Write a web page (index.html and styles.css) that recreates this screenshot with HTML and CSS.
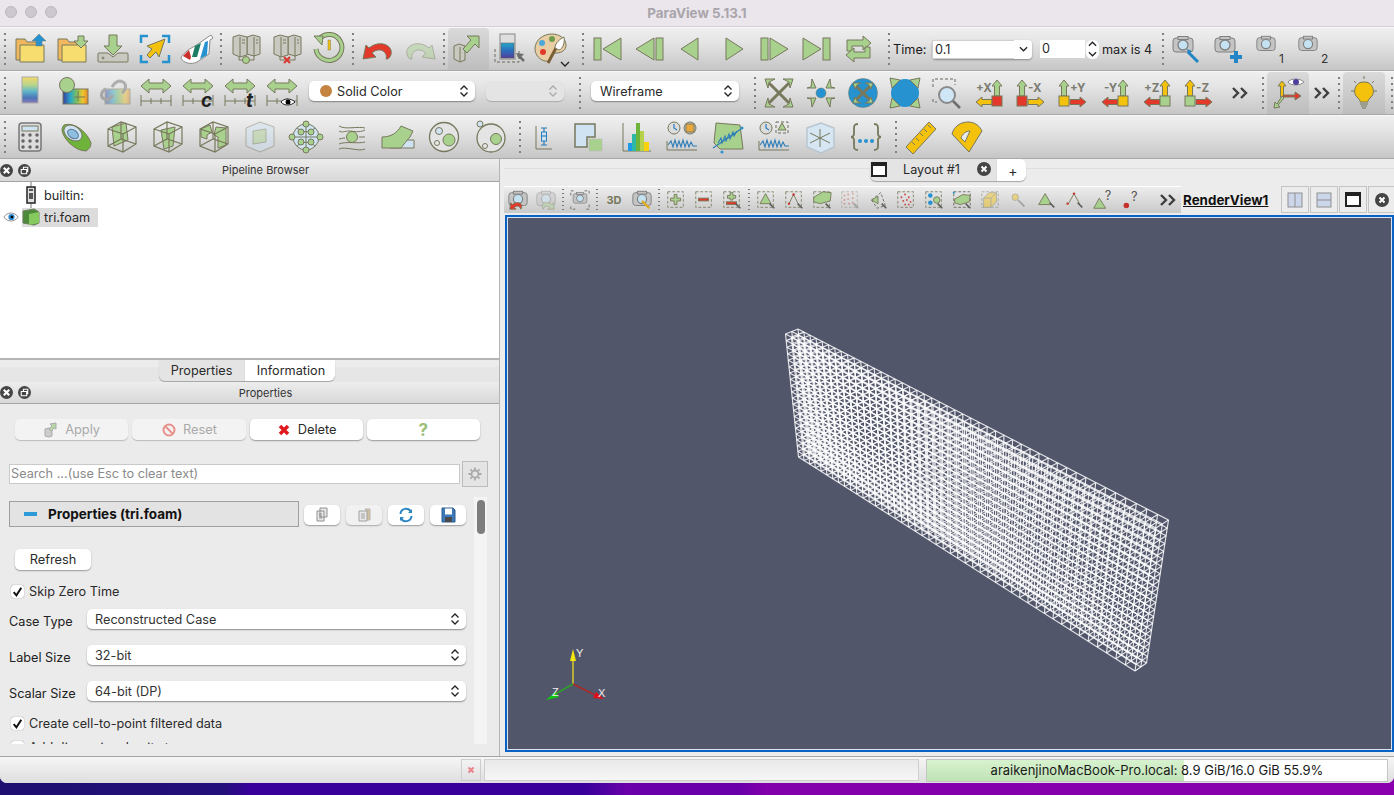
FILE: index.html
```html
<!DOCTYPE html>
<html lang="en">
<head>
<meta charset="utf-8">
<title>ParaView 5.13.1</title>
<link rel="stylesheet" href="styles.css">
</head>
<body>
<svg class="defs" aria-hidden="true">
  <defs>
    <linearGradient id="cmap" x1="0" y1="0" x2="0" y2="1">
      <stop offset="0" stop-color="#f3d86a"/><stop offset=".3" stop-color="#b9d58a"/><stop offset=".55" stop-color="#5fb7c9"/><stop offset=".8" stop-color="#4b74b8"/><stop offset="1" stop-color="#8b78b6"/>
    </linearGradient>
    <linearGradient id="cmaph" x1="0" y1="0" x2="1" y2="0">
      <stop offset="0" stop-color="#3b3f9e"/><stop offset=".3" stop-color="#2aa6c9"/><stop offset=".55" stop-color="#7cc05e"/><stop offset=".8" stop-color="#f2c52e"/><stop offset="1" stop-color="#e2872b"/>
    </linearGradient>
    <linearGradient id="cmapd" x1="0" y1="0" x2="0" y2="1">
      <stop offset="0" stop-color="#28a7c8"/><stop offset=".5" stop-color="#2b6fbc"/><stop offset="1" stop-color="#51409b"/>
    </linearGradient>
    <symbol id="folder" viewBox="0 0 36 36"><path class="or" d="M4 29V8h9l2 3h12v18z"/><path class="ye2" d="M8 31V14h24v17z"/></symbol>
    <symbol id="servers" viewBox="0 0 36 36"><path class="sv" d="M19 6l6-2 7 2v17l-6 2-7-2z"/><path class="sv" d="M5 6l6-2 8 2v18l-7 2-7-3z"/><path class="ln" d="M12 6v20M26 6v19M14 9h3M14 12h3M28 9h2M28 12h2M11 26v3h15v-4"/></symbol>
    <symbol id="rescale" viewBox="0 0 36 36"><path class="gn" d="M3 11l8-7v4h14V4l8 7-8 7v-4H11v4z"/><path class="ln" d="M3 20v11M33 20v11M3 26h30M13 23v6M23 23v6"/></symbol>
    <symbol id="camera" viewBox="0 0 24 24"><rect class="cb" x="2" y="4" width="20" height="14" rx="3"/><rect class="cb" x="7" y="2.500" width="10" height="3"/><circle class="cl" cx="12" cy="11" r="5"/></symbol>
    <symbol id="dash" viewBox="0 0 24 24"><rect class="ds" x="3" y="3" width="17" height="17"/></symbol>
    <symbol id="cursor" viewBox="0 0 24 24"><path class="cu" d="M16 16l5 5"/></symbol>
    <symbol id="up" viewBox="0 0 12 18"><path d="M6 1l5 6H8.500v10h-5V7H1z"/></symbol>
    <symbol id="rt" viewBox="0 0 18 12"><path d="M17 6l-6 5V8.500H1v-5h10V1z"/></symbol>
    <symbol id="lf" viewBox="0 0 18 12"><path d="M1 6l6 5V8.500h10v-5H7V1z"/></symbol>
    <symbol id="wire" viewBox="0 0 36 36"><path class="wf" d="M4 10l13-7 15 5v17l-13 8L4 27zM4 10l15 5v18M19 15l13-7M17 3v17M4 27l13-7 15 5"/></symbol>
    <symbol id="dbl" viewBox="0 0 20 14"><path class="dbl" d="M3 2l5 5-5 5M11 2l5 5-5 5"/></symbol>
  </defs>
</svg>

<div class="window">
  <header class="titlebar">
    <div class="lights"><span class="light"></span><span class="light"></span><span class="light"></span></div>
    <div class="wintitle">ParaView 5.13.1</div>
  </header>

  <div class="tb">
    <span class="sep"></span>
    <span class="i"><svg class="ic" viewBox="0 0 36 36"><use href="#folder"/><path class="bl" d="M27 3l7 7h-4v5h-6v-5h-4z"/></svg></span>
    <span class="i"><svg class="ic" viewBox="0 0 36 36"><use href="#folder"/><path class="gn" d="M27 17l7-7h-4V5h-6v5h-4z"/></svg></span>
    <span class="i"><svg class="ic" viewBox="0 0 36 36"><path class="tray" d="M4 22h9l5 4 5-4h9a1 1 0 0 1 1 1v7a1 1 0 0 1-1 1H4a1 1 0 0 1-1-1v-7a1 1 0 0 1 1-1z"/><circle class="ln" cx="8" cy="27" r="1"/><path class="gn" d="M18 24l-9-9h5V4h8v11h5z"/></svg></span>
    <span class="i"><svg class="ic" viewBox="0 0 36 36"><path class="cr" d="M4 12V5h7M25 5h7v7M32 24v7h-7M11 31H4v-7"/><path class="ye" d="M28 8L10 15l5 3-5 6 3 3 6-6 3 5z"/></svg></span>
    <span class="i"><svg class="ic" viewBox="0 0 36 36"><path class="wh" d="M32 4l2 3-3 2-1 14-12 8c-6 3-14 1-16-4 1-3 6-8 14-12l13-9z"/><path class="rd0" d="M4 25l6-6 2 7-1 3z"/><path class="gn0" d="M13 26l3-11 6-3-4 14z"/><path class="bl0" d="M21 28l5-17 3-1-1 14z"/></svg></span>
    <span class="sep"></span>
    <span class="i"><svg class="ic" viewBox="0 0 36 36"><use href="#servers"/><circle class="gn" cx="18" cy="29" r="3.500"/></svg></span>
    <span class="i"><svg class="ic" viewBox="0 0 36 36"><use href="#servers"/><path class="xr" d="M15 26l6 6M21 26l-6 6"/></svg></span>
    <span class="i"><svg class="ic" viewBox="0 0 36 36"><path class="ringo" d="M9 7A13 13 0 1 1 5 18"/><path class="ringi" d="M9 7A13 13 0 1 1 5 18"/><path class="gn" d="M3 5l9 0-1 9z"/><rect class="yb" x="17" y="9" width="2.500" height="10"/></svg></span>
    <span class="sep"></span>
    <span class="i"><svg class="ic" viewBox="0 0 36 36"><path class="rd" d="M3 28l3-14 3 3c6-5 15-6 20-1 3 3 3 8 0 11-1 1-2 1-3 1 1-3 0-6-3-8-3-2-8-1-11 2l4 4z"/></svg></span>
    <span class="i faded"><svg class="ic" viewBox="0 0 36 36"><path class="gn" d="M33 28l-3-14-3 3c-6-5-15-6-20-1-3 3-3 8 0 11 1 1 2 1 3 1-1-3 0-6 3-8 3-2 8-1 11 2l-4 4z"/></svg></span>
    <span class="sep"></span>
    <span class="i on"><svg class="ic" viewBox="0 0 36 36"><path class="sv" d="M4 15l5-2 6 2v14l-5 2-6-3z"/><path class="ln" d="M10 16v15"/><path class="gn" d="M29 5v12l-4-4-8 9-4-4 8-9-4-4z"/></svg></span>
    <span class="i"><svg class="ic" viewBox="0 0 36 36"><rect class="bar" x="8" y="3" width="15" height="25"/><rect class="cd" x="9" y="12" width="13" height="15"/><path class="dsn" d="M3 18v13h24V18"/><path class="cu2" d="M26 24l6 6"/><path class="cu3" d="M24 22l8 1-5 5z"/></svg></span>
    <span class="i ipal"><svg class="ic" viewBox="0 0 36 36"><path class="pal" d="M18 3C9 3 1 9 1 18c0 6 5 11 10 12 4 1 6-1 6-4 0-3 2-4 5-4 6 0 10-3 10-8C32 8 26 3 18 3z"/><circle class="p1" cx="8" cy="12" r="3"/><circle class="p2" cx="18" cy="8" r="3"/><circle class="p3" cx="9" cy="21" r="3"/><path class="br" d="M14 32l8-15"/><path class="bw" d="M21 17c0-5 5-9 9-11 1 5-1 12-5 13z"/></svg><svg class="caret" viewBox="0 0 10 6"><path d="M1 1l4 4 4-4"/></svg></span>
    <span class="sep sep7"></span>
    <span class="i"><svg class="ic" viewBox="0 0 36 36"><rect class="gn" x="4" y="7" width="7" height="22"/><path class="gn" d="M31 7v22L13 18z"/></svg></span>
    <span class="i"><svg class="ic" viewBox="0 0 36 36"><rect class="gn" x="25" y="7" width="7" height="22"/><path class="gn" d="M23 7v22L5 18z"/></svg></span>
    <span class="i"><svg class="ic" viewBox="0 0 36 36"><path class="gn" d="M25 7v22L8 18z"/></svg></span>
    <span class="i"><svg class="ic" viewBox="0 0 36 36"><path class="gn" d="M11 7v22l17-11z"/></svg></span>
    <span class="i"><svg class="ic" viewBox="0 0 36 36"><rect class="gn" x="4" y="7" width="7" height="22"/><path class="gn" d="M13 7v22l18-11z"/></svg></span>
    <span class="i"><svg class="ic" viewBox="0 0 36 36"><rect class="gn" x="25" y="7" width="7" height="22"/><path class="gn" d="M5 7v22l18-11z"/></svg></span>
    <span class="i"><svg class="ic" viewBox="0 0 36 36"><path class="gn" d="M7 20V9h16V5l8 7-8 7v-4H12v5z"/><path class="gn" d="M30 16v11H14v4l-8-7 8-7v4h11v-5z"/></svg></span>
    <span class="sep sep7"></span>
    <span class="lbl time">Time:</span>
    <span class="combo"><span class="combotext">0.1</span><span class="combobtn"><svg class="chev" viewBox="0 0 10 6"><path d="M1 1l4 4 4-4"/></svg></span></span>
    <span class="spin">0</span>
    <span class="spinbtns"><svg class="chev" viewBox="0 0 10 6"><path d="M1 5l4-4 4 4"/></svg><svg class="chev" viewBox="0 0 10 6"><path d="M1 1l4 4 4-4"/></svg></span>
    <span class="lbl maxis">max is 4</span>
    <span class="sep sep8"></span>
    <span class="i"><svg class="ic" viewBox="0 0 36 36"><use href="#camera" x="2" y="3" width="24" height="24"/><path class="wr" d="M19 21l10 10"/><path class="wr2" d="M18 18l1 5 4-3z"/></svg></span>
    <span class="i"><svg class="ic" viewBox="0 0 36 36"><use href="#camera" x="2" y="3" width="24" height="24"/><path class="pl" d="M25 20v12M19 26h12"/></svg></span>
    <span class="i"><svg class="ic" viewBox="0 0 36 36"><use href="#camera" x="3" y="3" width="22" height="22"/><text class="sub" x="27" y="32">1</text></svg></span>
    <span class="i"><svg class="ic" viewBox="0 0 36 36"><use href="#camera" x="3" y="3" width="22" height="22"/><text class="sub" x="27" y="32">2</text></svg></span>
  </div>

  <div class="tb">
    <span class="sep"></span>
    <span class="i2"><svg class="ic" viewBox="0 0 36 36"><rect class="cmap" x="10" y="2" width="16" height="26"/></svg></span>
    <span class="i2"><svg class="ic" viewBox="0 0 36 36"><rect class="cmaph" x="9" y="14" width="25" height="15"/><path class="ln" d="M24 16v10M20 22h11"/><circle class="gn" cx="13" cy="10" r="7.500"/></svg></span>
    <span class="i2 faded"><svg class="ic" viewBox="0 0 36 36"><rect class="cmaph" x="9" y="14" width="25" height="15"/><path class="chain" d="M10 14c-5 2-6 8-2 10s7-1 9-4M16 12c3-5 7-7 11-5s3 8-1 11"/></svg></span>
    <span class="i2"><svg class="ic" viewBox="0 0 36 36"><use href="#rescale"/></svg></span>
    <span class="i2"><svg class="ic" viewBox="0 0 36 36"><use href="#rescale"/><text class="tag" x="21" y="32">c</text></svg></span>
    <span class="i2"><svg class="ic" viewBox="0 0 36 36"><use href="#rescale"/><text class="tag" x="24" y="32">t</text></svg></span>
    <span class="i2"><svg class="ic" viewBox="0 0 36 36"><use href="#rescale"/><path class="eyeb" d="M17 27c3-4 10-4 14 0-4 4-11 4-14 0z"/><circle class="eyep" cx="24" cy="27" r="2.500"/></svg></span>
    <span class="select s-solid"><span class="dot"></span><span class="seltext">Solid Color</span><svg class="updn" viewBox="0 0 10 14"><path d="M1.500 5.500L5 2l3.500 3.500M1.500 8.500L5 12l3.500-3.500"/></svg></span>
    <span class="select s-empty"><svg class="updn" viewBox="0 0 10 14"><path d="M1.500 5.500L5 2l3.500 3.500M1.500 8.500L5 12l3.500-3.500"/></svg></span>
    <span class="sep sep15"></span>
    <span class="select s-wire"><span class="seltext">Wireframe</span><svg class="updn" viewBox="0 0 10 14"><path d="M1.500 5.500L5 2l3.500 3.500M1.500 8.500L5 12l3.500-3.500"/></svg></span>
    <span class="sep sep15b"></span>
    <span class="i2"><svg class="ic" viewBox="0 0 36 36"><path class="thick" d="M8 8l20 20M28 8L8 28"/><path class="gn" d="M4 4h10l-6 3-1 6zM32 4H22l6 3 1 6zM4 32h10l-6-3-1-6zM32 32H22l6-3 1-6z"/></svg></span>
    <span class="i2"><svg class="ic" viewBox="0 0 36 36"><circle class="bl" cx="18" cy="18" r="5"/><path class="gn" d="M13 13H4l4-1 1-8zM23 13h9l-4-1-1-8zM13 23H4l4 1 1 8zM23 23h9l-4 1-1 8z"/></svg></span>
    <span class="i2"><svg class="ic" viewBox="0 0 36 36"><circle class="bl" cx="18" cy="18" r="14.500"/><path class="thick" d="M11 11l14 14M25 11L11 25"/><path class="gn" d="M8 8h8l-4 2-2 4zM28 8h-8l4 2 2 4zM8 28h8l-4-2-2-4zM28 28h-8l4-2 2-4z"/></svg></span>
    <span class="i2"><svg class="ic" viewBox="0 0 36 36"><circle class="bln" cx="18" cy="18" r="14"/><path class="gn" d="M3 3l10 2-8 8zM33 3l-10 2 8 8zM3 33l10-2-8-8zM33 33l-10-2 8-8z"/></svg></span>
    <span class="i2"><svg class="ic" viewBox="0 0 36 36"><path class="dsn" d="M4 12V4h22v6M4 24v3h4"/><circle class="mag" cx="18" cy="20" r="8"/><path class="cu2" d="M24 26l7 7"/></svg></span>
    <span class="i2"><svg class="ic" viewBox="0 0 36 36"><text class="ax" x="5" y="17">+X</text><use class="g-a" href="#up" x="20" y="4" width="12" height="18"/><use class="y-a" href="#lf" x="4" y="21" width="18" height="12"/><rect class="rd" x="21" y="21" width="10" height="10"/></svg></span>
    <span class="i2"><svg class="ic" viewBox="0 0 36 36"><text class="ax" x="15" y="17">-X</text><use class="g-a" href="#up" x="3" y="4" width="12" height="18"/><use class="y-a" href="#rt" x="14" y="21" width="18" height="12"/><rect class="rd" x="4" y="21" width="10" height="10"/></svg></span>
    <span class="i2"><svg class="ic" viewBox="0 0 36 36"><text class="ax" x="15" y="17">+Y</text><use class="g-a" href="#up" x="3" y="4" width="12" height="18"/><use class="r-a" href="#rt" x="14" y="21" width="18" height="12"/><rect class="ye" x="4" y="21" width="10" height="10"/></svg></span>
    <span class="i2"><svg class="ic" viewBox="0 0 36 36"><text class="ax" x="7" y="17">-Y</text><use class="g-a" href="#up" x="20" y="4" width="12" height="18"/><use class="r-a" href="#lf" x="4" y="21" width="18" height="12"/><rect class="ye" x="21" y="21" width="10" height="10"/></svg></span>
    <span class="i2"><svg class="ic" viewBox="0 0 36 36"><text class="ax" x="5" y="17">+Z</text><use class="y-a" href="#up" x="20" y="4" width="12" height="18"/><use class="r-a" href="#lf" x="4" y="21" width="18" height="12"/><rect class="gn" x="21" y="21" width="10" height="10"/></svg></span>
    <span class="i2"><svg class="ic" viewBox="0 0 36 36"><text class="ax" x="15" y="17">-Z</text><use class="y-a" href="#up" x="3" y="4" width="12" height="18"/><use class="r-a" href="#rt" x="14" y="21" width="18" height="12"/><rect class="gn" x="4" y="21" width="10" height="10"/></svg></span>
    <span class="more m40"><svg class="dblic" viewBox="0 0 20 14"><use href="#dbl"/></svg></span>
    <span class="sep"></span>
    <span class="i2 on"><svg class="ic" viewBox="0 0 36 36"><path class="ye" d="M12 6l4 5h-2.500v11h-3V11H8z"/><path class="rd" d="M13 20h12v-3l6 4-6 4v-3H13z"/><path class="gn" d="M12 21l2 2-6 7 2 2-6 1 1-6 2 2z"/><path class="eyew" d="M18 7c3-4 12-4 16 0-4 4-13 4-16 0z"/><circle class="eyev" cx="26" cy="7" r="3"/></svg></span>
    <span class="more m25"><svg class="dblic" viewBox="0 0 20 14"><use href="#dbl"/></svg></span>
    <span class="sep sep9"></span>
    <span class="i2 on"><svg class="ic" viewBox="0 0 36 36"><path class="ye" d="M18 7a9 9 0 0 0-6 16c2 2 2 3 2 4h8c0-1 0-2 2-4a9 9 0 0 0-6-16z"/><path class="ln" d="M14 29h8M15 31h6M16 33h4M18 1v3M5 16h3M28 16h3M8 6l2 2M28 6l-2 2"/></svg></span>
    <span class="sep sep6"></span>
  </div>

  <div class="tb tb3">
    <span class="sep tight"></span>
    <span class="i3"><svg class="ic" viewBox="0 0 36 36"><rect class="calc" x="7" y="4" width="22" height="28" rx="3"/><rect class="lb" x="10" y="7" width="16" height="5"/><path class="keys" d="M11 16h.01M18 16h.01M25 16h.01M11 22h.01M18 22h.01M25 22h.01M11 28h.01M18 28h.01M25 28h.01"/></svg></span>
    <span class="i3"><svg class="ic" viewBox="0 0 36 36"><path class="gs" d="M6 6c9-3 22 5 27 18 0 4-2 6-5 8C17 32 5 20 4 11c0-2 1-4 2-5z"/><ellipse class="lb" cx="15" cy="14" rx="10" ry="7" transform="rotate(35 15 14)"/><ellipse class="lbd" cx="15" cy="15" rx="6" ry="4" transform="rotate(35 15 15)"/></svg></span>
    <span class="i3"><svg class="ic" viewBox="0 0 36 36"><path class="gn" d="M8 8l14-4 2 17-14 6z"/><use href="#wire"/></svg></span>
    <span class="i3"><svg class="ic" viewBox="0 0 36 36"><path class="gn" d="M11 11l14-3-2 19-9 3z"/><use href="#wire"/></svg></span>
    <span class="i3"><svg class="ic" viewBox="0 0 36 36"><path class="gn" d="M5 10l9-4 2 7-5 3v4l-6-2zM20 8l10 1v17l-8 3v-11l-4-2z"/><use href="#wire"/></svg></span>
    <span class="i3 faded"><svg class="ic" viewBox="0 0 36 36"><path class="lb" d="M4 9l14-6 14 5v19l-14 6L4 27z"/><path class="gn" d="M11 12l13-2v13l-13 2z"/></svg></span>
    <span class="i3"><svg class="ic" viewBox="0 0 36 36"><circle class="lb" cx="18" cy="18" r="13"/><path class="ln" d="M5 18h26M18 5v26M9 9c6 5 12 5 18 0M9 27c6-5 12-5 18 0"/><circle class="gn" cx="18" cy="5" r="3"/><circle class="gn" cx="18" cy="31" r="3"/><circle class="gn" cx="4" cy="18" r="3"/><circle class="gn" cx="32" cy="18" r="3"/><circle class="gn" cx="13" cy="13" r="3"/><circle class="gn" cx="23" cy="13" r="3"/><circle class="gn" cx="13" cy="23" r="3"/><circle class="gn" cx="23" cy="23" r="3"/></svg></span>
    <span class="i3"><svg class="ic" viewBox="0 0 36 36"><circle class="gn" cx="18" cy="18" r="5.500"/><path class="ln" d="M5 7c6 4 20 0 26 2M5 12c3 2 6 0 10 0 4 0 10 2 16-1M5 25c6-3 20 0 26-2M5 30c6-3 20 3 26 0M5 20c1 0 3-1 6-1M25 18h6"/></svg></span>
    <span class="i3"><svg class="ic" viewBox="0 0 36 36"><path class="lb" d="M10 29l4-8h20v8z"/><path class="gn" d="M2 18c9 0 15-4 19-11l12 5-3 6c-3 3-9 11-9 11H2z"/></svg></span>
    <span class="i3"><svg class="ic" viewBox="0 0 36 36"><circle class="gyc" cx="18" cy="18" r="14.500"/><circle class="gn" cx="23" cy="21" r="6"/><circle class="lb" cx="13" cy="12" r="3.500"/><circle class="wh2" cx="11" cy="24" r="2.500"/></svg></span>
    <span class="i3"><svg class="ic" viewBox="0 0 36 36"><circle class="lb" cx="8" cy="5" r="3"/><circle class="gyc" cx="19" cy="19" r="14"/><circle class="gn" cx="24" cy="20" r="5.500"/><circle class="wh2" cx="13" cy="27" r="2.500"/></svg></span>
    <span class="sep s3a"></span>
    <span class="i3"><svg class="ic" viewBox="0 0 36 36"><path class="ln" d="M10 7v23h16"/><path class="lnb" d="M18 9v17M15 9h6M15 26h6"/><rect class="lb2" x="15.500" y="13" width="5" height="9"/><path class="lnb" d="M15 17h6"/></svg></span>
    <span class="i3"><svg class="ic" viewBox="0 0 36 36"><path class="lbn" d="M3 5h20v13h-8v10H3z"/><rect class="gd" x="17" y="20" width="13" height="12"/></svg></span>
    <span class="i3"><svg class="ic" viewBox="0 0 36 36"><path class="ln" d="M5 4v28h28"/><rect class="hb" x="10" y="24" width="4" height="8"/><rect class="hc" x="14" y="15" width="4" height="17"/><rect class="hg" x="18" y="4" width="4" height="28"/><rect class="hl" x="22" y="12" width="4" height="20"/><rect class="hy" x="26" y="23" width="5" height="9"/></svg></span>
    <span class="i3"><svg class="ic" viewBox="0 0 36 36"><circle class="clock" cx="10" cy="9" r="6"/><path class="lnb" d="M10 5v4l3 2"/><circle class="oc" cx="26" cy="9" r="6"/><rect class="oc2" x="22" y="5" width="8" height="8"/><path class="wave" d="M4 26l3-4 2 6 2-7 2 7 2-6 2 6 2-7 2 7 2-6 2 6 2-5 2 4h4"/><path class="ln" d="M3 22v9h30"/></svg></span>
    <span class="i3"><svg class="ic" viewBox="0 0 36 36"><path class="gn" d="M6 4l24 2 3 24H10L4 24z"/><path class="lnb" d="M3 29L31 10"/><path class="wave" d="M8 24l3-5 1 5 3-7 1 5 3-7 1 5 3-7 1 4 3-5"/><circle class="bl0" cx="12" cy="33" r="1.500"/><circle class="bl0" cx="32" cy="9" r="1.500"/></svg></span>
    <span class="i3"><svg class="ic" viewBox="0 0 36 36"><circle class="clock" cx="10" cy="9" r="6"/><path class="lnb" d="M10 5v4l3 2"/><rect class="dsn" x="20" y="3" width="12" height="11"/><path class="gn" d="M26 4l4 7h-8z"/><path class="wave" d="M4 26l3-4 2 6 2-7 2 7 2-6 2 6 2-7 2 7 2-6 2 6 2-5 2 4h4"/><path class="ln" d="M3 22v9h30"/></svg></span>
    <span class="i3"><svg class="ic" viewBox="0 0 36 36"><path class="lbg" d="M5 9l14-5 13 5v19l-13 6-14-6z"/><path class="ln" d="M18 10v18M8 14l20 10M8 24l20-10"/></svg></span>
    <span class="i3"><svg class="ic" viewBox="0 0 36 36"><path class="brace" d="M10 5c-4 0-4 2-4 5v5c0 2-2 3-3 3 1 0 3 1 3 3v5c0 3 0 5 4 5M26 5c4 0 4 2 4 5v5c0 2 2 3 3 3-1 0-3 1-3 3v5c0 3 0 5-4 5"/><circle class="bl0" cx="12" cy="22" r="2"/><circle class="bl0" cx="18" cy="22" r="2"/><circle class="bl0" cx="24" cy="22" r="2"/></svg></span>
    <span class="sep s3b"></span>
    <span class="i3"><svg class="ic" viewBox="0 0 36 36"><path class="ye" d="M3 28L26 3l7 7-23 25z"/><path class="ln" d="M9 23l3 3M13 19l3 3M17 14l3 3M21 10l3 3M25 6l3 3"/></svg></span>
    <span class="i3"><svg class="ic" viewBox="0 0 36 36"><path class="ye" d="M3 15C5 7 12 3 19 3c6 0 11 3 14 9L20 33z"/><path class="lg" d="M12 19c1-4 5-7 9-7l-5 11z"/></svg></span>
  </div>

  <main class="main">
    <aside class="left">
      <div class="dockhead">
        <span class="dockbtn"><svg class="dk" viewBox="0 0 12 12"><path d="M3.500 3.500l5 5M8.500 3.500l-5 5"/></svg></span>
        <span class="dockbtn"><svg class="dk thin" viewBox="0 0 12 12"><path d="M3 5h5v4H3zM5 5V3h4v4H8"/></svg></span>
        <span class="docktitle">Pipeline Browser</span>
      </div>
      <div class="tree">
        <div class="treerow first">
          <span class="treeicon"><svg class="ti" viewBox="0 0 18 18"><path class="trl" d="M9 -5V1M9 17v6"/><rect class="srv" x="5" y="1" width="8" height="16"/><rect class="srvl" x="7" y="3" width="4" height="2"/><rect class="srvl" x="7" y="7" width="4" height="6"/></svg></span>
          <span class="treetext">builtin:</span>
        </div>
        <div class="treerow second">
          <svg class="eye" viewBox="0 0 18 12"><path class="eyew" d="M1 6c4-6 12-6 16 0-4 6-12 6-16 0z"/><circle class="eyeb2" cx="9.500" cy="6" r="3.500"/><circle class="eyep" cx="10" cy="6" r="1.500"/></svg>
          <span class="treesel">
            <svg class="ti" viewBox="0 0 18 18"><path class="cube1" d="M1 3l11-2 5 3v11l-5 2-11-2z"/><path class="cube2" d="M7 6l10-2v11l-10 2z"/></svg>
            <span class="treetext">tri.foam</span>
          </span>
        </div>
      </div>
      <div class="tabs"><span class="tab tabsel">Properties</span><span class="tab tabw">Information</span></div>
      <div class="dockhead props">
        <span class="dockbtn"><svg class="dk" viewBox="0 0 12 12"><path d="M3.500 3.500l5 5M8.500 3.500l-5 5"/></svg></span>
        <span class="dockbtn"><svg class="dk thin" viewBox="0 0 12 12"><path d="M3 5h5v4H3zM5 5V3h4v4H8"/></svg></span>
        <span class="docktitle">Properties</span>
      </div>
      <div class="panel">
        <div class="actions">
          <span class="btn dis"><svg class="bi" viewBox="0 0 16 16"><path class="ap1" d="M2 7l4-1 3 1v7l-3 1-4-1z"/><path class="ap2" d="M13 1v6l-2-1-3 3-2-2 3-3-2-2z"/></svg>Apply</span>
          <span class="btn dis"><svg class="bi" viewBox="0 0 16 16"><circle class="noc" cx="8" cy="8" r="5.500"/><path class="noc" d="M4 4l8 8"/></svg>Reset</span>
          <span class="btn"><svg class="bi" viewBox="0 0 16 16"><path class="xbig" d="M4 4l8 8M12 4l-8 8"/></svg>Delete</span>
          <span class="btn qm">?</span>
        </div>
        <div class="searchrow">
          <span class="search">Search ...(use Esc to clear text)</span>
          <span class="gear"><svg class="gi" viewBox="0 0 16 16"><circle cx="8" cy="8" r="3.500"/><path d="M8 1.500v2.500M8 12v2.500M1.500 8H4M12 8h2.500M3.400 3.400l1.800 1.800M10.800 10.800l1.800 1.800M12.600 3.400l-1.800 1.800M5.200 10.800l-1.800 1.800"/></svg></span>
        </div>
        <div class="scrollarea">
          <div class="content">
            <div class="sechead">
              <span class="secbox"><span class="minus"></span><b class="sectitle">Properties (tri.foam)</b></span>
              <span class="sbtn"><svg class="bi" viewBox="0 0 16 16"><path class="doc" d="M6 1h7v9H6zM3 4h7v10H3zM5 7h3M5 9h3M5 11h3"/></svg></span>
              <span class="sbtn dim"><svg class="bi" viewBox="0 0 16 16"><path class="clip" d="M9 2h5v11h-4V2z"/><path class="doc" d="M3 4h8v10H3zM5 7h4M5 9h4M5 11h4"/></svg></span>
              <span class="sbtn"><svg class="bi" viewBox="0 0 16 16"><path class="refresh" d="M2.500 7A5.500 5.500 0 0 1 13 5M13.500 9A5.500 5.500 0 0 1 3 11"/><path class="refa" d="M14 2v4h-4zM2 14v-4h4z"/></svg></span>
              <span class="sbtn"><svg class="bi" viewBox="0 0 16 16"><path class="fl" d="M2 1h11l2 2v12H2z"/><rect class="flw" x="5" y="1.500" width="7" height="6"/><rect class="fld" x="5" y="10" width="7" height="5"/></svg></span>
            </div>
            <span class="btn refreshbtn">Refresh</span>
            <label class="chk skip"><span class="box"><svg class="tick" viewBox="0 0 12 12"><path d="M2.500 6.500l2.500 3 4.500-7"/></svg></span>Skip Zero Time</label>
            <div class="field f1"><span class="flabel">Case Type</span><span class="select sfull"><span class="seltext">Reconstructed Case</span><svg class="updn" viewBox="0 0 10 14"><path d="M1.500 5.500L5 2l3.500 3.500M1.500 8.500L5 12l3.500-3.500"/></svg></span></div>
            <div class="field"><span class="flabel">Label Size</span><span class="select sfull"><span class="seltext">32-bit</span><svg class="updn" viewBox="0 0 10 14"><path d="M1.500 5.500L5 2l3.500 3.500M1.500 8.500L5 12l3.500-3.500"/></svg></span></div>
            <div class="field"><span class="flabel">Scalar Size</span><span class="select sfull"><span class="seltext">64-bit (DP)</span><svg class="updn" viewBox="0 0 10 14"><path d="M1.500 5.500L5 2l3.500 3.500M1.500 8.500L5 12l3.500-3.500"/></svg></span></div>
            <label class="chk create"><span class="box"><svg class="tick" viewBox="0 0 12 12"><path d="M2.500 6.500l2.500 3 4.500-7"/></svg></span>Create cell-to-point filtered data</label>
            <label class="chk addu"><span class="box"></span>Add dimensional units to</label>
          </div>
          <div class="scrolltrack"><span class="thumb"></span></div>
        </div>
      </div>
    </aside>

    <section class="right">
      <div class="layoutbar">
        <div class="layouttabs">
          <span class="ltab"><span class="winicon"></span><span class="ltabname">Layout #1</span><span class="closeround"><svg class="dk" viewBox="0 0 12 12"><path d="M3.500 3.500l5 5M8.500 3.500l-5 5"/></svg></span></span>
          <span class="lplus">+</span>
        </div>
      </div>
      <div class="viewbar">
        <div class="viewtools">
          <span class="v"><svg class="vi" viewBox="0 0 24 24"><use href="#camera"/><path class="rd" d="M3 22l1-7 2 2c3-3 9-3 10 1 0 2 0 3-1 4-1-3-3-4-5-3-1 0-2 1-2 1l2 2z"/></svg></span>
          <span class="v faded"><svg class="vi" viewBox="0 0 24 24"><use href="#camera"/><path class="gn" d="M21 22l-1-7-2 2c-3-3-9-3-10 1 0 2 0 3 1 4 1-3 3-4 5-3 1 0 2 1 2 1l-2 2z"/></svg></span>
          <span class="vs"></span>
          <span class="v"><svg class="vi" viewBox="0 0 24 24"><path class="dsn" d="M2 7V2h5M17 2h5v5M22 17v5h-5M7 22H2v-5"/><use href="#camera" x="3" y="2" width="18" height="18"/></svg></span>
          <span class="vs"></span>
          <span class="v"><span class="v3d">3D</span></span>
          <span class="v"><svg class="vi" viewBox="0 0 24 24"><use href="#camera"/><path class="pen" d="M12 13l8 8"/></svg></span>
          <span class="vs"></span>
          <span class="v"><svg class="vi" viewBox="0 0 24 24"><use href="#dash"/><path class="gn" d="M10 6h3v4h4v3h-4v4h-3v-4H6v-3h4z"/></svg></span>
          <span class="v"><svg class="vi" viewBox="0 0 24 24"><use href="#dash"/><rect class="rd" x="6" y="10" width="11" height="3"/></svg></span>
          <span class="v"><svg class="vi" viewBox="0 0 24 24"><use href="#dash"/><path class="gn" d="M10 4h3v3h3v3h-3v2h-3v-2H7V7h3z"/><rect class="rd" x="6" y="14" width="11" height="3"/><use href="#cursor"/></svg></span>
          <span class="vs"></span>
          <span class="v"><svg class="vi" viewBox="0 0 24 24"><use href="#dash"/><path class="gn" d="M11.500 5l6 11h-12z"/><use href="#cursor"/></svg></span>
          <span class="v"><svg class="vi" viewBox="0 0 24 24"><use href="#dash"/><path class="ln" d="M11.500 6l-5 10M11.500 6l5 10"/><circle class="rd0" cx="11.500" cy="6" r="1.300"/><circle class="rd0" cx="6.500" cy="16" r="1.300"/><use href="#cursor"/></svg></span>
          <span class="v"><svg class="vi" viewBox="0 0 24 24"><use href="#dash"/><path class="gn" d="M3 9l10-6 9 1-1 9-11 3-7-2z"/><use href="#cursor"/></svg></span>
          <span class="v faded"><svg class="vi" viewBox="0 0 24 24"><use href="#dash"/><path class="rdots" d="M6 7h.01M10 6h.01M15 5h.01M6 12h.01M10 11h.01M15 10h.01M6 16h.01M11 16h.01M15 15h.01"/><use href="#cursor"/></svg></span>
          <span class="v"><svg class="vi" viewBox="0 0 24 24"><path class="dsn" d="M5 12l10-8 5 14-9 3z"/><path class="gn" d="M5 12l7-4v8z"/><use href="#cursor"/></svg></span>
          <span class="v"><svg class="vi" viewBox="0 0 24 24"><use href="#dash"/><path class="rdots" d="M7 9h.01M11 6h.01M15 9h.01M9 13h.01M13 12h.01M17 14h.01M11 17h.01M15 17h.01"/></svg></span>
          <span class="v"><svg class="vi" viewBox="0 0 24 24"><use href="#dash"/><circle class="bl0" cx="8" cy="7" r="2.500"/><circle class="bl0" cx="8" cy="15" r="2.500"/><circle class="gn" cx="15" cy="12" r="3.500"/><use href="#cursor"/></svg></span>
          <span class="v"><svg class="vi" viewBox="0 0 24 24"><path class="dsn" d="M3 3h18v17H3z"/><path class="gn" d="M4 11l9-5 8 1-1 7-10 3-6-2z"/><path class="bl0" d="M2 3h2v2H2z"/><use href="#cursor"/></svg></span>
          <span class="v faded"><svg class="vi" viewBox="0 0 24 24"><path class="dsn" d="M3 3h18v17H3z"/><path class="ye" d="M5 10l6-6h8v10l-6 6H5z"/><path class="ln" d="M5 10h8v10M13 10l6-6"/></svg></span>
          <span class="v faded"><svg class="vi" viewBox="0 0 24 24"><circle class="ye" cx="9" cy="9" r="3.500"/><path class="cu" d="M12 12l7 7"/></svg></span>
          <span class="v"><svg class="vi" viewBox="0 0 24 24"><path class="gn" d="M11 5l7 12H4z"/><path class="cu" d="M16 15l5 5"/></svg></span>
          <span class="v"><svg class="vi" viewBox="0 0 24 24"><path class="ln" d="M12 5l-6 11M12 5l6 11"/><circle class="rd0" cx="12" cy="5" r="1.300"/><circle class="rd0" cx="5" cy="16" r="1.300"/><path class="cu" d="M16 15l5 5"/></svg></span>
          <span class="v"><svg class="vi" viewBox="0 0 24 24"><path class="gn" d="M9 10l7 11H3z"/><text class="qtxt" x="15" y="12">?</text></svg></span>
          <span class="v"><svg class="vi" viewBox="0 0 24 24"><circle class="rd0" cx="8" cy="18" r="3"/><text class="qtxt" x="13" y="13">?</text></svg></span>
          <span class="more vmore"><svg class="dblic" viewBox="0 0 20 14"><use href="#dbl"/></svg></span>
        </div>
        <span class="rvname">RenderView1</span>
        <span class="vbtn"><svg class="vb" viewBox="0 0 18 18"><rect class="vbf" x="2" y="2" width="14" height="14"/><path class="vbl" d="M9 2v14"/></svg></span>
        <span class="vbtn"><svg class="vb" viewBox="0 0 18 18"><rect class="vbf" x="2" y="2" width="14" height="14"/><path class="vbl" d="M2 9h14"/></svg></span>
        <span class="vbtn"><span class="winicon"></span></span>
        <span class="vbtn"><span class="closeround"><svg class="dk" viewBox="0 0 12 12"><path d="M3.500 3.500l5 5M8.500 3.500l-5 5"/></svg></span></span>
      </div>
      <div class="viewport">
        <svg id="scene" class="scene" viewBox="508 218 883 531">
          <g id="mesh" class="mesh"></g>
          <g class="gizmo">
            <path class="gy" d="M573 684v-26"/><path class="gyh" d="M573 649l-3 12h6z"/>
            <path class="gg" d="M573 684l-21 12"/><path class="ggh" d="M546 700l9-8 4 5z"/>
            <path class="gr2" d="M573 684l22 11"/><path class="grh" d="M604 699l-11-1 3-6z"/>
            <text class="gt" x="576" y="657">Y</text><text class="gt" x="552" y="696">Z</text><text class="gt" x="598" y="697">X</text>
          </g>
        </svg>
      </div>
    </section>
  </main>

  <footer class="status">
    <span class="stx"><svg class="sx" viewBox="0 0 12 12"><path d="M3 3l6 6M9 3l-6 6"/></svg></span>
    <span class="stbox"></span>
    <span class="mem"><span class="memfill"></span><span class="memtext">araikenjinoMacBook-Pro.local: 8.9 GiB/16.0 GiB 55.9%</span></span>
  </footer>
</div>
<script src="mesh.js"></script>
</body>
</html>
```

FILE: styles.css
```css
*{box-sizing:border-box}
html,body{margin:0;height:795px;overflow:hidden}
body{background:linear-gradient(90deg,#1f0f70 0,#23107a 16%,#3a009c 18%,#3a009c 42%,#6a00aa 45%,#6a00aa 53%,#8200ac 55%,#8a00ae 100%);font-family:"Inter","Liberation Sans",sans-serif;font-size:12.700px;color:#2a2a2a}
.defs{display:block;width:0;height:0}
.window{height:783px;display:flex;flex-direction:column;background:#ececec;border-radius:0 0 7px 7px;overflow:hidden}
.titlebar{height:27px;flex:none;background:#ebe5ec;display:flex;align-items:center;justify-content:center;border-bottom:1px solid #d2d0d2;position:relative}
.lights{position:absolute;left:5px;top:6px;display:flex;gap:8px}
.light{width:12px;height:12px;border-radius:50%;background:#cdc8cf;border:1px solid #bdb8bf}
.wintitle{font-weight:700;font-size:13.400px;color:#a9a5aa}

.tb{height:44px;flex:none;display:flex;align-items:center;padding-left:2px;background:linear-gradient(#efefef,#e4e4e4 35%,#c6c6c6);border-top:1px solid #f7f7f7;border-bottom:1px solid #a9a9a9}
.tb3{height:44px}
.sep{flex:none;width:2px;height:32px;margin:0 3px 0 2px;background:repeating-linear-gradient(#808080 0 2px,transparent 2px 6px)}
.sep.tight{margin-right:1px}
.sep7{margin-left:9px}
.sep8{margin-left:8px;margin-right:2px}
.sep9{margin-left:4px;margin-right:3px}
.sep6{margin-left:6px}
.sep15{margin-left:15px;margin-right:10px}
.sep15b{margin-left:15px;margin-right:2px}
.s3a{margin-left:6px;margin-right:0}
.s3b{margin-left:6px;margin-right:1px}
.i,.i2,.i3{flex:none;height:42px;display:flex;align-items:center;justify-content:center;position:relative}
.i{width:41.750px}
.i2{width:42px}
.i3{width:46px}
.on{background:linear-gradient(#dadada,#bdbdbd);border-radius:4px 4px 0 0}
.faded{opacity:.45}
.ic{width:36px;height:36px;display:block;overflow:visible}
.caret{position:absolute;right:3px;bottom:3px;width:10px;height:6px;fill:none;stroke:#222;stroke-width:1.300}
.lbl{flex:none}
.time{width:39px;color:#1a1a1a;font-size:12.700px}
.combo{flex:none;width:100px;height:19px;background:#fff;border-radius:4px;display:flex;box-shadow:0 1px 2px rgba(0,0,0,.35)}
.combotext{flex:1;padding:2px 0 0 2px;border:1px solid #cfcfcf;border-right:0;font-size:12.700px;line-height:14px}
.combobtn{width:18px;display:flex;align-items:center;justify-content:center}
.chev{width:9px;height:6px;fill:none;stroke:#222;stroke-width:1.400;display:block}
.spin{flex:none;width:45px;height:18px;margin-left:8px;background:#fff;font-size:12.700px;line-height:18px;padding-left:2px}
.spinbtns{flex:none;width:13px;height:19px;margin:0 3px 0 1px;background:#fff;border-radius:6px;display:flex;flex-direction:column;justify-content:space-around;align-items:center}
.maxis{width:52px;font-size:12.700px;color:#222;white-space:nowrap}
.select{flex:none;display:flex;align-items:center;height:20px;background:#fff;border-radius:5px;box-shadow:0 1px 1.500px rgba(0,0,0,.4);font-size:12.700px}
.seltext{flex:1;white-space:nowrap}
.updn{flex:none;width:10px;height:14px;fill:none;stroke:#222;stroke-width:1.300}
.dot{width:12px;height:12px;border-radius:50%;background:#c4843f;margin:0 5px 0 11px}
.tb .select{margin-bottom:4px}
.s-solid{width:166px;padding-right:6px;margin-left:6px}
.s-empty{width:78px;margin-left:11px;padding-right:6px;justify-content:flex-end;background:#e4e4e4;box-shadow:0 1px 1px rgba(0,0,0,.2)}
.s-empty .updn{stroke:#aaa}
.s-wire{width:148px;padding:0 6px 0 9px}
.more{flex:none;display:flex;align-items:center;justify-content:center;height:20px}
.dblic{display:block;width:20px;height:14px}
.dbl{fill:none;stroke:#3f3f3f;stroke-width:2.400}
.m40{width:40px}
.m25{width:25px}

.gn{fill:#a9d18e;stroke:#77785c}
.ye{fill:#f4c20d;stroke:#77785c}
.ye2{fill:#f7dc6f;stroke:#77785c}
.or{fill:#f1b75f;stroke:#77785c}
.rd{fill:#e2392b;stroke:#77785c}
.bl{fill:#2692d0;stroke:#77785c;stroke-width:.500}
.bl0{fill:#2692d0}
.rd0{fill:#c5312a}
.gn0{fill:#1d7c66}
.bln{fill:#2692d0;stroke:none}
.lb{fill:#cfe3f3;stroke:#77785c}
.lb2{fill:#cfe3f3;stroke:#2b7cb8}
.lbn{fill:#cfe3f3;stroke:#77785c;stroke-width:1.500}
.lbg{fill:#d6e6f3;stroke:#b9c6cf;stroke-width:1.500}
.ln{fill:none;stroke:#77785c}
.lnb{fill:none;stroke:#2b7cb8;stroke-width:1.200}
.sv{fill:#c9c9c1;stroke:#77785c}
.tray{fill:#c9c9c1;stroke:#77785c}
.cr{fill:none;stroke:#2692d0;stroke-width:2.500}
.wh{fill:#fff;stroke:#8a8a8a}
.wh2{fill:#e8e8e8;stroke:#77785c}
.xr{fill:none;stroke:#d93a34;stroke-width:2.200}
.ringo{fill:none;stroke:#77785c;stroke-width:5}
.ringi{fill:none;stroke:#a9d18e;stroke-width:3}
.yb{fill:#f4c20d;stroke:#77785c;stroke-width:.500}
.bar{fill:#dedede;stroke:#888}
.cd{fill:url(#cmapd);stroke:#555;stroke-width:.500}
.ds{fill:none;stroke:#77785c;stroke-width:.900;stroke-dasharray:3 2}
.dsn{fill:none;stroke:#6b6b60;stroke-dasharray:3 2}
.cu{fill:none;stroke:#5d5d5d;stroke-width:1.800}
.cu2{fill:none;stroke:#6d6d6d;stroke-width:2.500}
.cu3{fill:#6d6d6d}
.pal{fill:#e9cda5;stroke:#77785c}
.p1{fill:#4ca8d8}
.p2{fill:#6f9c4c}
.p3{fill:#e03a2a}
.br{fill:none;stroke:#7a5f35;stroke-width:3}
.bw{fill:#fff;stroke:#77785c}
.wr{fill:none;stroke:#2285c5;stroke-width:3}
.wr2{fill:#2285c5}
.pl{fill:none;stroke:#2285c5;stroke-width:4}
.cb{fill:#c4c4c4;stroke:#7f7f7f}
.cl{fill:#c5e2f2;stroke:#7f7f7f;stroke-width:1.300}
.sub{font-size:12px;fill:#333}
.cmap{fill:url(#cmap);stroke:#aaa}
.cmaph{fill:url(#cmaph);stroke:#77785c}
.chain{fill:none;stroke:#6b6b6b;stroke-width:3}
.tag{font-size:19px;font-weight:700;font-style:italic;fill:#222}
.eyeb{fill:#fff;stroke:#222;stroke-width:1}
.eyep{fill:#000}
.eyew{fill:#fff;stroke:#888}
.eyev{fill:#4a3f9b}
.eyeb2{fill:#2a86c8}
.thick{fill:none;stroke:#77785c;stroke-width:3}
.mag{fill:#cfe6f6;stroke:#8a8a8a;stroke-width:2}
.ax{font-size:11.500px;font-weight:700;fill:#7b7b70}
.g-a{fill:#a9d18e;stroke:#77785c}
.y-a{fill:#f4c20d;stroke:#77785c}
.r-a{fill:#e2392b;stroke:#77785c}
.calc{fill:#ddd;stroke:#77777a;stroke-width:1.500}
.keys{fill:none;stroke:#666;stroke-width:3.500;stroke-linecap:round}
.gs{fill:#6fb43a;stroke:#77785c}
.lbd{fill:#8fbfe0;stroke:#5a7a95}
.wf{fill:none;stroke:#77785c;stroke-width:1.200}
.gyc{fill:#e4e4e4;stroke:#77785c;stroke-width:1.300}
.gd{fill:#a9d18e;stroke:#bbb;stroke-dasharray:2 1}
.hb{fill:#1e9be8}
.hc{fill:#2db8a8}
.hg{fill:#6fb43a}
.hl{fill:#b7d24a}
.hy{fill:#f7d20a}
.clock{fill:#dcdcdc;stroke:#77785c}
.oc{fill:#c9c9c9;stroke:#77785c}
.oc2{fill:#eba93a;stroke:#77785c}
.wave{fill:none;stroke:#2b7cb8;stroke-width:1.100}
.brace{fill:none;stroke:#77785c;stroke-width:1.800}
.lg{fill:#e8e8e8;stroke:#77785c}

.main{flex:1;min-height:0;display:flex}
.left{width:500px;flex:none;display:flex;flex-direction:column;border-right:1px solid #b4b4b4}
.dockhead{height:23px;flex:none;display:flex;align-items:center;gap:5px;background:linear-gradient(#ededed,#d8d8d8);border-bottom:1px solid #a4a4a4;position:relative}
.dockbtn{width:13px;height:13px;border-radius:50%;background:#454545;display:block;flex:none}
.dk{display:block;width:12px;height:12px;fill:none;stroke:#fff;stroke-width:2}
.dockbtn .dk{width:13px;height:13px}
.dk.thin{stroke-width:1}
.docktitle{position:absolute;left:0;right:0;text-align:center;font-size:11px;color:#333;margin-left:32px;pointer-events:none}
.tree{height:178px;flex:none;background:#fff;border-bottom:2px solid #b5b5b5;padding-top:2px}
.treerow{height:22px;display:flex;align-items:center;font-size:12.700px}
.treerow.first{padding-left:22px;gap:4px}
.treeicon{width:18px;height:18px}
.ti{width:18px;height:18px;display:block;flex:none;overflow:visible}
.trl{fill:none;stroke:#777}
.srv{fill:#e0e0e0;stroke:#222;stroke-width:1.500}
.srvl{fill:#555}
.second{padding-left:3px}
.eye{width:16px;height:12px;display:block;margin-right:3px;flex:none}
.treesel{display:flex;align-items:center;gap:4px;height:19px;width:76px;background:#dcdcdc}
.cube1{fill:#4f8a3a;stroke:#6d7d5d}
.cube2{fill:#85c95f}
.tabs{height:22px;flex:none;display:flex;justify-content:center;padding-right:6px;background:linear-gradient(#ececec 30%,#e6e6e6 30%)}
.tab{height:21px;display:flex;align-items:center;justify-content:center;font-size:12.700px}
.tabsel{width:86px;background:#e4e4e4;border-radius:0 0 0 6px;box-shadow:0 1px 1px rgba(0,0,0,.3)}
.tabw{width:90px;padding-left:3px;background:#fff;border-radius:0 0 6px 0;box-shadow:0 1px 1px rgba(0,0,0,.3)}
.dockhead.props{height:22px}
.panel{flex:1;min-height:0;display:flex;flex-direction:column;background:#ebebeb;padding-top:15px}
.actions{display:flex;gap:4px;padding:0 19px 0 15px;height:22px}
.btn{flex:1;display:flex;align-items:center;justify-content:center;gap:6px;background:#fff;border-radius:5px;box-shadow:0 1px 1.500px rgba(0,0,0,.35);font-size:12.800px;height:21px}
.btn.dis{background:#f3f3f3;color:#a9a9a9;box-shadow:0 1px 1px rgba(0,0,0,.2)}
.bi{width:16px;height:16px;flex:none;display:block}
.ap1{fill:#ccc;stroke:#aaa}
.ap2{fill:#b6d6a5;stroke:#aaa}
.noc{fill:none;stroke:#e9908c;stroke-width:2}
.xbig{fill:none;stroke:#e0191f;stroke-width:3.500}
.qm{font-size:17px;font-weight:700;color:#9cbf79}
.searchrow{display:flex;align-items:center;height:26px;margin:20px 0 0 9px;gap:2px}
.search{width:451px;height:20px;background:#fff;border:1px solid #c9c9c9;color:#8a8a8a;font-size:12.700px;line-height:18px;padding-left:1px}
.gear{width:26px;height:26px;border:1px solid #bcbcbc;background:#e4e4e4;display:flex;align-items:center;justify-content:center}
.gi{width:16px;height:16px;fill:none;stroke:#aaa;stroke-width:1.800}
.scrollarea{min-height:0;display:flex;margin-top:10px;height:247px;flex:none}
.content{width:474px;height:247px;overflow:hidden;flex:none;padding:4px 0 0 9px}
.scrolltrack{width:13px;height:247px;background:#f4f4f4;padding:3px 0 0 3px}
.thumb{display:block;width:8px;height:34px;border-radius:4px;background:#7d7d7d}
.sechead{display:flex;align-items:center;height:26px}
.secbox{width:290px;height:26px;border:1px solid #9f9f9f;background:#e3e3e3;display:flex;align-items:center;padding-left:14px;gap:11px}
.minus{width:13px;height:4px;background:#2e9ad8}
.sectitle{font-size:13.500px;color:#111}
.sbtn{width:36px;height:20px;margin-left:6px;background:#fff;border-radius:5px;box-shadow:0 1px 1.500px rgba(0,0,0,.35);display:flex;align-items:center;justify-content:center;margin-top:1px}
.sechead .secbox + .sbtn{margin-left:5px}
.sbtn.dim{background:#f3f3f3;opacity:.8}
.doc{fill:#e8e8e8;stroke:#8f8f8f}
.clip{fill:#cbb68c;stroke:#aaa}
.refresh{fill:none;stroke:#2e86c1;stroke-width:2}
.refa{fill:#2e86c1}
.fl{fill:#3d78b8;stroke:#2b5b91}
.flw{fill:#fff}
.fld{fill:#4a4a4a}
.refreshbtn{width:76px;margin:22px 0 0 6px}
.chk{display:flex;align-items:center;gap:5px;font-size:12.700px;height:16px;margin-left:2px;white-space:nowrap}
.skip{margin-top:13px}
.create{margin-top:14px}
.addu{margin-top:8.500px}
.box{width:13px;height:13px;border-radius:3px;background:#fff;box-shadow:0 0 1px rgba(0,0,0,.6);flex:none;display:block}
.tick{display:block;width:13px;height:13px;fill:none;stroke:#111;stroke-width:1.800}
.field{display:flex;align-items:center;height:20px;margin-top:16px;padding-right:8px}
.f1{margin-top:10px}
.flabel{width:78px;font-size:12.700px;color:#222;padding-top:5px}
.sfull{flex:1;padding:0 6px 0 8px;color:#333}

.right{flex:1;min-width:0;display:flex;flex-direction:column;padding-left:4px;background:#ececec}
.layoutbar{height:27px;flex:none;display:flex;justify-content:center;background:linear-gradient(#ececec 9px,#dedede 9px,#dedede 10px,#ececec 10px)}
.layouttabs{display:flex;height:22px;margin-right:2px}
.ltab{width:127px;display:flex;align-items:center;background:#e4e4e4;border-radius:6px 0 0 6px;box-shadow:0 1px 1px rgba(0,0,0,.3);padding-bottom:2px}
.winicon{display:block;flex:none;width:16px;height:15px;border:2px solid #222;border-top-width:4px;background:#fff}
.ltab .winicon{margin-left:1px}
.ltabname{font-size:12.700px;margin:0 17px 0 16px;white-space:nowrap}
.closeround{display:block;flex:none;width:14px;height:14px;border-radius:50%;background:#454545;padding:1px}
.lplus{width:29px;padding-left:3px;background:#fff;border-radius:0 6px 6px 0;display:flex;align-items:center;justify-content:center;font-size:14px;box-shadow:0 1px 1px rgba(0,0,0,.3)}
.viewbar{height:29px;flex:none;display:flex;align-items:flex-start;background:#ececec}
.viewtools{width:677px;height:27px;flex:none;display:flex;align-items:center;background:linear-gradient(#ededed,#c9c9c9);border-top:1px solid #fff;overflow:hidden}
.v{flex:none;width:28px;height:26px;display:flex;align-items:center;justify-content:center}
.vi{display:block;width:22px;height:22px;overflow:visible}
.vs{flex:none;width:2px;height:22px;margin:0 2px;background:repeating-linear-gradient(#777 0 1.500px,transparent 1.500px 4px)}
.v3d{font-size:11px;font-weight:700;color:#77785c}
.pen{fill:none;stroke:#e0ad1f;stroke-width:2.500}
.rdots{fill:none;stroke:#c5483f;stroke-width:2;stroke-linecap:round}
.qtxt{font-size:14px;fill:#555}
.vmore{width:24px;margin-left:12px}
.rvname{flex:none;width:100px;height:27px;font-weight:700;font-size:13.400px;color:#111;text-decoration:underline;display:flex;align-items:center;padding-left:2px}
.vbtn{flex:none;width:28px;height:27px;border:1px solid #c4c4c4;background:#ececec;display:flex;align-items:center;justify-content:center;margin-right:1px}
.vb{width:18px;height:18px;display:block}
.vbf{fill:#ccd6ea;stroke:#8f8f8f}
.vbl{fill:none;stroke:#8f8f8f}
.viewport{flex:1;min-height:0;margin:0 0 4px 1px;border:2px solid #0a63c4;background:#52566b;box-shadow:inset 0 0 0 1px #d8e3f0}
.scene{display:block;width:883px;height:531px;margin:1px}
.mesh line{stroke:#fff;stroke-width:1.150;stroke-opacity:.85}
.gy{stroke:#d8cf2a;stroke-width:1.500;fill:none}
.gyh{fill:#f4e60e}
.gg{stroke:#2aa02a;stroke-width:1.500;fill:none}
.ggh{fill:#10c810}
.gr2{stroke:#b02828;stroke-width:1.500;fill:none}
.grh{fill:#e0101a}
.gt{font-size:11px;fill:#f0f0f0;font-family:"Liberation Sans",sans-serif}

.status{height:27px;flex:none;display:flex;align-items:center;background:linear-gradient(#f6f6f6,#dedede);border-top:1px solid #a4a4a4;padding-left:461px}
.stx{width:20px;height:22px;border:1px solid #cdcdcd;display:flex;align-items:center;justify-content:center}
.sx{width:10px;height:10px;fill:none;stroke:#e9858a;stroke-width:2.500}
.stbox{width:435px;height:22px;margin-left:3px;border:1px solid #cfcfcf;background:linear-gradient(#e9e9e9,#f6f6f6)}
.mem{width:462px;height:23px;margin-left:7px;background:#fff;border:1px solid #c4c4c4;position:relative;display:flex;align-items:center;justify-content:center}
.memfill{position:absolute;left:0;top:0;bottom:0;width:55.900%;background:linear-gradient(#d8f2cf,#bfe3b5)}
.memtext{position:relative;font-size:13px;color:#1a1a1a;white-space:nowrap}
```

FILE: mesh.js
```js
// Draws the internal wireframe of the thin box as a projected hexahedral grid.
(function () {
  var NS = 'http://www.w3.org/2000/svg';
  var group = document.getElementById('mesh');

  function homography(q) {
    var x0 = q[0][0], y0 = q[0][1], x1 = q[1][0], y1 = q[1][1];
    var x2 = q[2][0], y2 = q[2][1], x3 = q[3][0], y3 = q[3][1];
    var dx1 = x1 - x2, dx2 = x3 - x2, sx = x0 - x1 + x2 - x3;
    var dy1 = y1 - y2, dy2 = y3 - y2, sy = y0 - y1 + y2 - y3;
    var d = dx1 * dy2 - dx2 * dy1;
    var g = (sx * dy2 - dx2 * sy) / d, h = (dx1 * sy - sx * dy1) / d;
    var a = x1 - x0 + g * x1, b = x3 - x0 + h * x3;
    var c = y1 - y0 + g * y1, e = y3 - y0 + h * y3;
    return function (u, v) {
      var w = g * u + h * v + 1;
      return [(a * u + b * v + x0) / w, (c * u + e * v + y0) / w];
    };
  }
  function line(p, r) {
    var l = document.createElementNS(NS, 'line');
    l.setAttribute('x1', p[0].toFixed(1));
    l.setAttribute('y1', p[1].toFixed(1));
    l.setAttribute('x2', r[0].toFixed(1));
    l.setAttribute('y2', r[1].toFixed(1));
    group.appendChild(l);
  }
  function mix(p, r, t) {
    return [p[0] + (r[0] - p[0]) * t, p[1] + (r[1] - p[1]) * t];
  }
  var NX = 46, NY = 20, NZ = 2;
  var A = homography([[785.5, 334], [1156, 528], [1135, 671], [798.5, 457]]);
  var B = homography([[798, 329], [1168.5, 520], [1146.5, 663], [810.5, 452]]);
  function P(i, j, k) {
    return mix(A(i / NX, j / NY), B(i / NX, j / NY), k / NZ);
  }
  var i, j, k;
  for (k = 0; k <= NZ; k++) {
    for (i = 0; i <= NX; i++) line(P(i, 0, k), P(i, NY, k));
    for (j = 0; j <= NY; j++) line(P(0, j, k), P(NX, j, k));
  }
  for (i = 0; i <= NX; i++) {
    for (j = 0; j <= NY; j++) line(P(i, j, 0), P(i, j, NZ));
  }
})();
```
